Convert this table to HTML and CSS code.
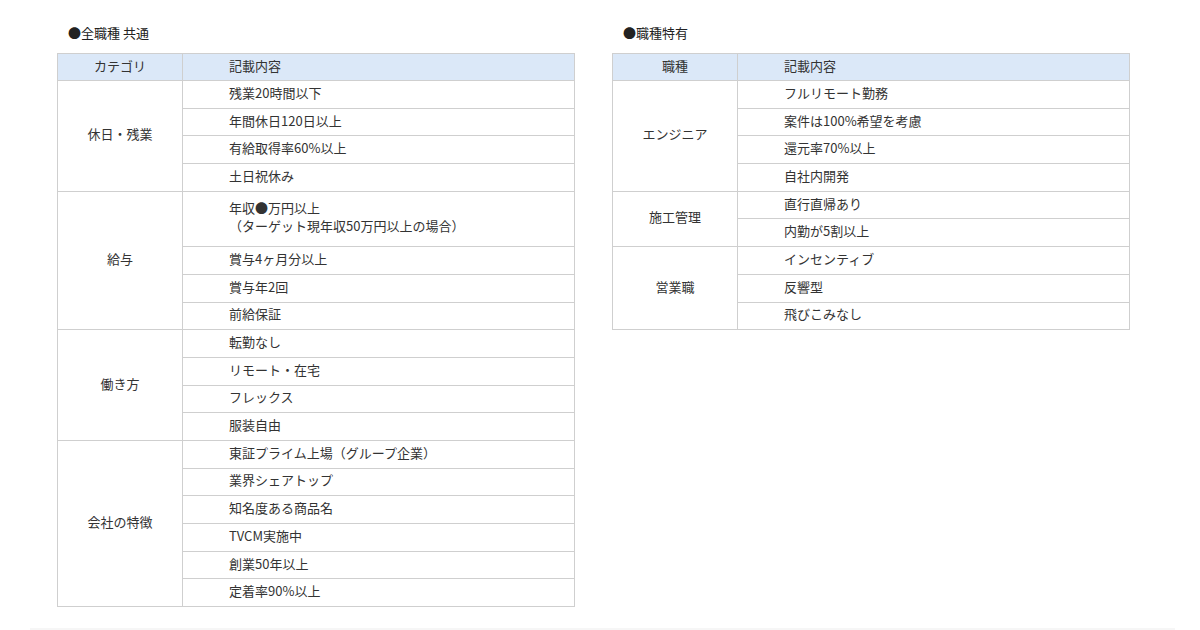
FILE: index.html
```html
<!DOCTYPE html>
<html lang="ja">
<head>
<meta charset="utf-8">
<link rel="stylesheet" href="styles.css">
</head>
<body>
<div class="page">
  <div class="columns">
    <section class="block">
      <div class="title">●全職種 共通</div>
      <table class="grid">
        <tr class="head"><th class="cat">カテゴリ</th><th class="item">記載内容</th></tr>
        <tr><td class="cat" rowspan="4">休日・残業</td><td class="item">残業20時間以下</td></tr>
        <tr><td class="item">年間休日120日以上</td></tr>
        <tr><td class="item">有給取得率60%以上</td></tr>
        <tr><td class="item">土日祝休み</td></tr>
        <tr class="double"><td class="cat" rowspan="4">給与</td><td class="item">年収●万円以上<br>（ターゲット現年収50万円以上の場合）</td></tr>
        <tr><td class="item">賞与4ヶ月分以上</td></tr>
        <tr><td class="item">賞与年2回</td></tr>
        <tr><td class="item">前給保証</td></tr>
        <tr><td class="cat" rowspan="4">働き方</td><td class="item">転勤なし</td></tr>
        <tr><td class="item">リモート・在宅</td></tr>
        <tr><td class="item">フレックス</td></tr>
        <tr><td class="item">服装自由</td></tr>
        <tr><td class="cat" rowspan="6">会社の特徴</td><td class="item">東証プライム上場（グループ企業）</td></tr>
        <tr><td class="item">業界シェアトップ</td></tr>
        <tr><td class="item">知名度ある商品名</td></tr>
        <tr><td class="item">TVCM実施中</td></tr>
        <tr><td class="item">創業50年以上</td></tr>
        <tr><td class="item">定着率90%以上</td></tr>
      </table>
    </section>
    <section class="block">
      <div class="title">●職種特有</div>
      <table class="grid">
        <tr class="head"><th class="cat">職種</th><th class="item">記載内容</th></tr>
        <tr><td class="cat" rowspan="4">エンジニア</td><td class="item">フルリモート勤務</td></tr>
        <tr><td class="item">案件は100%希望を考慮</td></tr>
        <tr><td class="item">還元率70%以上</td></tr>
        <tr><td class="item">自社内開発</td></tr>
        <tr><td class="cat" rowspan="2">施工管理</td><td class="item">直行直帰あり</td></tr>
        <tr><td class="item">内勤が5割以上</td></tr>
        <tr><td class="cat" rowspan="3">営業職</td><td class="item">インセンティブ</td></tr>
        <tr><td class="item">反響型</td></tr>
        <tr><td class="item">飛びこみなし</td></tr>
      </table>
    </section>
  </div>
  <div class="strip"></div>
</div>
</body>
</html>
```

FILE: styles.css
```css
html, body {
  margin: 0;
  padding: 0;
  background: #ffffff;
}
body {
  font-family: "Noto Sans CJK JP", "Noto Sans", sans-serif;
  font-size: 13px;
  color: #333333;
}
.page {
  width: 1200px;
  height: 630px;
  overflow: hidden;
  padding-top: 25px;
  box-sizing: border-box;
}
.columns {
  display: flex;
  align-items: flex-start;
  gap: 37px;
  padding-left: 57px;
}
.block {
  width: 518px;
}
.title {
  height: 16px;
  line-height: 16px;
  padding-left: 11px;
  margin-bottom: 12px;
  color: #222222;
}
.grid {
  width: 518px;
  border-collapse: collapse;
  table-layout: fixed;
}
.grid th,
.grid td {
  border: 1px solid #cfcfcf;
  padding: 0 0 3px 0;
  font-weight: normal;
  line-height: 18px;
  vertical-align: middle;
}
.grid tr {
  height: 27.7px;
}
.grid tr.head {
  height: 27px;
}
.grid tr.head th {
  background: #dbe8f8;
}
.grid tr.double {
  height: 55.4px;
}
.grid .cat {
  width: 124px;
  text-align: center;
}
.grid th.item,
.grid td.item {
  text-align: left;
  padding-left: 46px;
}
.strip {
  margin: 21px 25px 0 30px;
  height: 4px;
  background: #f6f6f6;
}
```
